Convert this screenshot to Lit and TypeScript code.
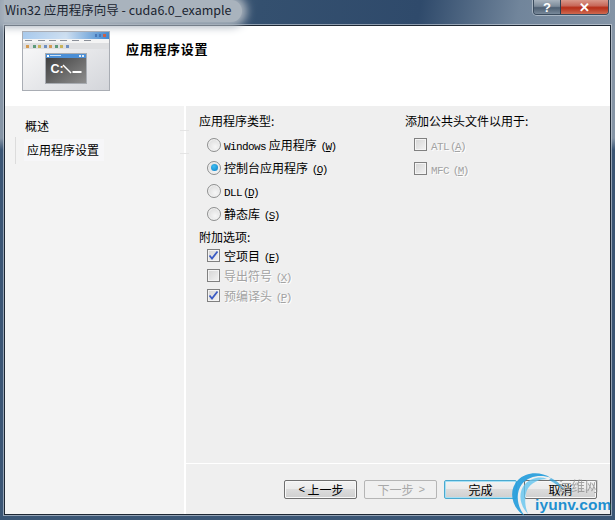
import { LitElement, html, css, svg } from "lit";
import { customElement } from "lit/decorators.js";

@customElement("app-root")
export class AppRoot extends LitElement {
  static styles = css`
    :host { display: block; width: 615px; height: 520px; overflow: hidden; position: relative; font-family: "Noto Sans CJK SC", "Liberation Sans", sans-serif; font-size: 12px; color: #000; }
    * { box-sizing: border-box; }
    .win { width: 615px; height: 520px; display: flex; flex-direction: column; padding: 0 4px 5px 4px;
      background:
        linear-gradient(100deg, #8a99aa 0, #9aa7b5 14%, #5f7389 24%, #34506f 42%, #2f4a6b 68%, #71859b 84%, #8494a6 100%) 0 0 / 100% 26px no-repeat,
        linear-gradient(#8695a6 0, #8695a6 138px, #3b5675 150px, #3b5675 100%); }
    .title { height: 25px; flex: none; display: flex; align-items: flex-start; position: relative; }
    .title-text { font: 12.5px "Noto Sans CJK SC", "Open Sans", sans-serif; height: 22px; line-height: 20px; padding: 0 10px 0 1px; color: #1a2430; background: #a9b3bd; border-radius: 0 12px 12px 0; box-shadow: 0 0 8px 5px #a9b3bd; white-space: nowrap; }
    .caps { position: absolute; right: 2px; top: 0; height: 15px; display: flex; border: 1px solid #3b4c5e; border-top: none; border-radius: 0 0 4px 4px; overflow: hidden; box-shadow: 0 0 0 1px #c3ccd5aa; }
    .cap { display: flex; align-items: center; justify-content: center; color: #fff; font: bold 13px "Liberation Sans", sans-serif; line-height: 13px; }
    .help { width: 27px; background: linear-gradient(#a7b2bd 0, #7c8b9a 45%, #4d5f72 55%, #79899a 100%); border-right: 1px solid #2f3f50; }
    .close { width: 47px; background: linear-gradient(#d9988a 0, #c8695a 40%, #b62e18 55%, #cf6a50 100%); }
    .client { flex: 1; min-height: 0; display: flex; flex-direction: column; background: #fff; border: 1px solid #1d2733; box-shadow: 0 0 0 1px #cfd6dd99; }
    .head { height: 80px; flex: none; background: #fff; display: flex; padding: 5px 0 0 17px; }
    .thumb { width: 88px; height: 60px; flex: none; }
    .head-title { margin: 9px 0 0 16px; font-size: 13px; font-weight: 700; line-height: 17px; letter-spacing: 0.7px; }
    .body { flex: 1; display: flex; min-height: 0; position: relative; }
    .side { width: 179px; flex: none; background: #f3f3f3; padding: 9px 0 0 10px; position: relative; }
    .gut { width: 2px; background: #fff; flex: none; }
    .tick { position: absolute; left: 175px; width: 9px; height: 1px; background: #e4e4e4; }
    .side-a { font-size: 12px; line-height: 18px; padding-left: 10px; margin-top: 2px; }
    .side-b { font-size: 12px; line-height: 22px; margin: 4px 0 0 9px; padding-left: 3px; width: 80px; background: #f6f6f8; }
    .side-bar { position: absolute; left: 10px; top: 31px; width: 1px; height: 27px; background: #dcdcdc; }
    .main { flex: 1; min-width: 0; background: #efefef; display: flex; flex-direction: column; }
    .pane { flex: 1; min-height: 0; display: flex; padding: 6px 0 0 13px; }
    .col-l { width: 206px; flex: none; display: flex; flex-direction: column; }
    .col-r { flex: 1; display: flex; flex-direction: column; }
    .label { font-size: 12px; line-height: 18px; height: 18px; white-space: nowrap; }
    .opts { display: flex; flex-direction: column; padding-left: 8px; margin-top: 3px; }
    .radio-row { height: 23px; display: flex; align-items: center; gap: 3px; white-space: nowrap; }
    .chk-row { height: 20px; display: flex; align-items: center; gap: 4px; white-space: nowrap; }
    .mono { font: 11px "Liberation Mono", monospace; letter-spacing: -0.6px; }
    .key { font: 11px "Liberation Mono", monospace; letter-spacing: -1.6px; margin-left: 1px; }
    .key u { text-underline-offset: 1px; }
    .dis { color: #a3a3a3; text-shadow: 1px 1px 0 #fff; }
    .radio { width: 14px; height: 14px; flex: none; border-radius: 50%; border: 1px solid #8e8f8f; background: radial-gradient(circle at 60% 65%, #f6f6f6, #d6d6d6); display: flex; align-items: center; justify-content: center; box-shadow: inset 0 0 0 1px #f2f2f2; }
    .radio i { width: 7px; height: 7px; border-radius: 50%; background: radial-gradient(circle at 40% 35%, #3fbdf0, #0a7fc8); display: block; }
    .box { width: 13px; height: 13px; flex: none; border: 1px solid #808080; background: linear-gradient(135deg, #d4d4d4, #f3f3f3); box-shadow: inset 0 0 0 1px #f4f4f4; display: flex; align-items: center; justify-content: center; }
    .box svg { display: block; }
    .sec2 { margin-top: 3px; }
    .chks { margin-top: -1px; padding-left: 8px; display: flex; flex-direction: column; }
    .r-opts { padding-left: 9px; margin-top: 2px; display: flex; flex-direction: column; }
    .r-row { height: 24px; display: flex; align-items: center; gap: 4px; }
    .foot { height: 51px; flex: none; border-top: 1px solid #fff; display: flex; gap: 7px; padding: 16px 0 0 98px; }
    .btn { width: 73px; height: 19px; border: 1px solid #6f6f6f; border-radius: 2px; background: linear-gradient(#f2f2f2 0, #ebebeb 45%, #dcdcdc 50%, #cfcfcf 100%); box-shadow: inset 0 0 0 1px #f8f8f8; display: flex; align-items: center; justify-content: center; font-size: 12px; line-height: 15px; gap: 4px; }
    .btn.off { background: #f0f0f0; border-color: #b5b5b5; color: #a8a8a8; box-shadow: none; }
    .btn.def { border-color: #4aa9cf; box-shadow: inset 0 0 0 1px #a6e0f5; }
    .wm { position: absolute; left: 508px; top: 470px; width: 107px; height: 50px; pointer-events: none; }
    .wm-cn { position: absolute; left: 50px; top: 6px; font-size: 13.5px; line-height: 18px; color: #8f8f8f; opacity: .8; white-space: nowrap; }
    .wm-en { position: absolute; left: 27px; top: 26px; font: bold 15.5px "Liberation Sans", sans-serif; line-height: 17px; color: #1f8fd0; letter-spacing: .1px; white-space: nowrap; }
    .wm svg { position: absolute; left: 0; top: 0; }
  `;

  private check() {
    return html`<svg width="11" height="11" viewBox="0 0 11 11"><path d="M1.5 5.5 L4 8.5 L9.5 1.5" fill="none" stroke="#3b5bc4" stroke-width="1.8"/></svg>`;
  }

  private thumb() {
    return svg`<svg class="thumb" width="88" height="60" viewBox="0 0 88 60">
      <defs>
        <linearGradient id="bg" x1="0" y1="0" x2="1" y2="1"><stop offset="0" stop-color="#fdfdfd"/><stop offset="1" stop-color="#d3d5da"/></linearGradient>
        <linearGradient id="tb" x1="0" y1="0" x2="1" y2="0"><stop offset="0" stop-color="#a9cbee"/><stop offset=".5" stop-color="#cfe0f2"/><stop offset="1" stop-color="#3f87cf"/></linearGradient>
        <linearGradient id="con" x1="0" y1="0" x2="1" y2="1"><stop offset="0" stop-color="#3a3a3a"/><stop offset="1" stop-color="#8f8f8f"/></linearGradient>
      </defs>
      <rect x=".5" y=".5" width="87" height="59" fill="url(#bg)" stroke="#a9adb4"/>
      <rect x="1" y="1" width="86" height="7" fill="url(#tb)"/>
      <rect x="73" y="3" width="2" height="3" fill="#4a78b8"/><rect x="77" y="3" width="2" height="3" fill="#4a78b8"/><rect x="81" y="3" width="3" height="3" fill="#c9604a"/>
      <rect x="1" y="8" width="86" height="4" fill="#f4f4f4"/>
      ${[3, 16, 27, 38, 50, 62].map((x) => svg`<rect x="${x}" y="9" width="7" height="1" fill="#8a8f98"/>`)}
      <rect x="1" y="12" width="86" height="6" fill="#dedfe1"/>
      ${[4, 11, 16, 22, 27, 33, 38, 44].map((x, i) => svg`<rect x="${x}" y="14" width="3" height="3" fill="${["#d49a52", "#5d9a7a", "#c9b45a", "#6f8fc0"][i % 4]}"/>`)}
      <rect x="23.5" y="22.5" width="41" height="30" fill="url(#con)" stroke="#a8acb2"/>
      <rect x="24" y="23" width="40" height="4" fill="#4b8fd6"/>
      <rect x="25" y="24" width="2" height="2" fill="#fff"/><rect x="28" y="24" width="11" height="1" fill="#cfe3f5"/>
      <rect x="57" y="24" width="2" height="2" fill="#dfeaf5"/><rect x="60" y="24" width="2" height="2" fill="#dfeaf5"/>
      <text x="28.5" y="42" font-family="Liberation Sans, sans-serif" font-weight="700" font-size="12.5" fill="#fff">C:</text>
      <path d="M41 34 L49 42" stroke="#fff" stroke-width="1.5"/>
      <rect x="50.5" y="40" width="9" height="2" fill="#fff"/>
    </svg>`;
  }

  private logo() {
    return svg`<svg width="70" height="50" viewBox="0 0 70 50">
      <path d="M17 46 C3 38 0 20 10 10 C18 2 32 1 43 8 C33 4 21 6 14 14 C7 23 9 37 17 46 Z" fill="#2a9fdc" opacity=".95"/>
      <path d="M20 44 C11 35 10 22 17 14 C23 8 32 6 39 9 C30 9 23 13 19 20 C16 28 17 37 20 44 Z" fill="#63c4ef" opacity=".8"/>
      <path d="M43 8 C49 11 54 15 57 21 C52 17 47 13 41 10 Z" fill="#2a9fdc" opacity=".7"/>
    </svg>`;
  }

  render() {
    return html`
      <div class="win">
        <div class="title">
          <div class="title-text">Win32 应用程序向导 - cuda6.0_example</div>
          <div class="caps"><div class="cap help">?</div><div class="cap close">✕</div></div>
        </div>
        <div class="client">
          <div class="head">
            ${this.thumb()}
            <div class="head-title">应用程序设置</div>
          </div>
          <div class="body">
            <div class="side">
              <div class="side-a">概述</div>
              <div class="side-bar"></div>
              <div class="side-b">应用程序设置</div>
            </div>
            <div class="gut"></div>
            <div class="tick" style="top:24px"></div>
            <div class="tick" style="top:47px"></div>
            <div class="main">
              <div class="pane">
                <div class="col-l">
                  <div class="label">应用程序类型:</div>
                  <div class="opts">
                    <div class="radio-row"><span class="radio"></span><span><span class="mono">Windows</span>&nbsp;应用程序 <span class="key">(<u>W</u>)</span></span></div>
                    <div class="radio-row"><span class="radio"><i></i></span><span>控制台应用程序 <span class="key">(<u>O</u>)</span></span></div>
                    <div class="radio-row"><span class="radio"></span><span><span class="mono">DLL</span><span class="key">(<u>D</u>)</span></span></div>
                    <div class="radio-row"><span class="radio"></span><span>静态库 <span class="key">(<u>S</u>)</span></span></div>
                  </div>
                  <div class="label sec2">附加选项:</div>
                  <div class="chks">
                    <div class="chk-row"><span class="box">${this.check()}</span><span>空项目 <span class="key">(<u>E</u>)</span></span></div>
                    <div class="chk-row dis"><span class="box"></span><span>导出符号 <span class="key">(<u>X</u>)</span></span></div>
                    <div class="chk-row dis"><span class="box">${this.check()}</span><span>预编译头 <span class="key">(<u>P</u>)</span></span></div>
                  </div>
                </div>
                <div class="col-r">
                  <div class="label">添加公共头文件以用于:</div>
                  <div class="r-opts">
                    <div class="r-row dis"><span class="box"></span><span><span class="mono">ATL</span><span class="key">(<u>A</u>)</span></span></div>
                    <div class="r-row dis"><span class="box"></span><span><span class="mono">MFC</span> <span class="key">(<u>M</u>)</span></span></div>
                  </div>
                </div>
              </div>
              <div class="foot">
                <div class="btn"><span class="key">&lt;</span> 上一步</div>
                <div class="btn off">下一步 <span class="key">&gt;</span></div>
                <div class="btn def">完成</div>
                <div class="btn">取消</div>
              </div>
            </div>
          </div>
        </div>
      </div>
      <div class="wm">
        ${this.logo()}
        <div class="wm-cn">运维网</div>
        <div class="wm-en">iyunv.com</div>
      </div>
    `;
  }
}
